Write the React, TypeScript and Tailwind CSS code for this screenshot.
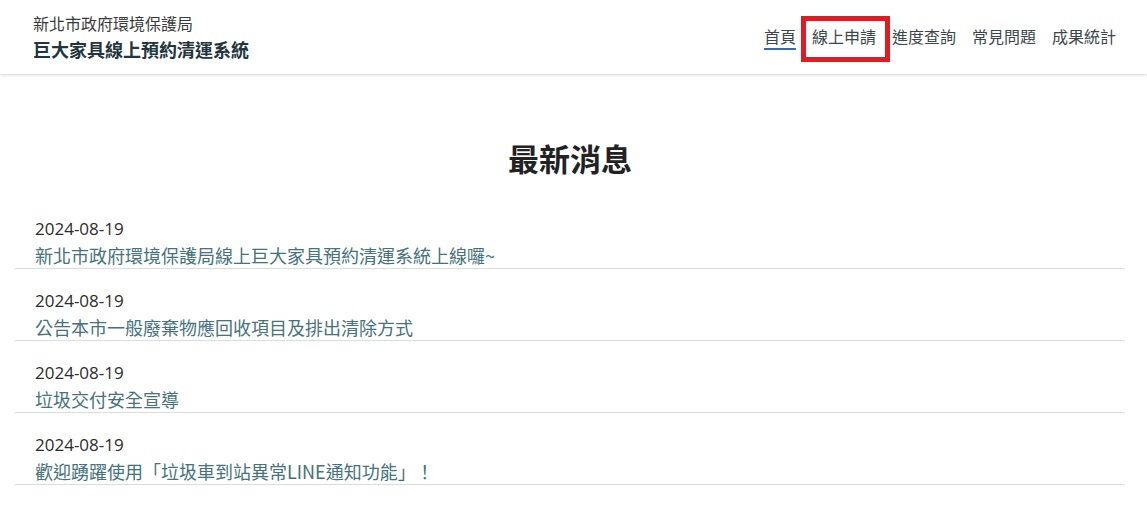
import React from "react";

const news = [
  { date: "2024-08-19", title: "新北市政府環境保護局線上巨大家具預約清運系統上線囉~" },
  { date: "2024-08-19", title: "公告本市一般廢棄物應回收項目及排出清除方式" },
  { date: "2024-08-19", title: "垃圾交付安全宣導" },
  { date: "2024-08-19", title: "歡迎踴躍使用「垃圾車到站異常LINE通知功能」！" },
];

const navItems = ["首頁", "線上申請", "進度查詢", "常見問題", "成果統計"];

export default function App() {
  return (
    <div className="min-h-[531px] w-full bg-white font-['Open_Sans','Noto_Sans_CJK_TC',sans-serif]">
      <header className="flex h-[74px] items-center justify-between pl-[33px] pr-[31px] shadow-[0_1px_3px_rgba(0,0,0,0.18)]">
        <div className="flex flex-col">
          <div className="text-[16px] leading-[24px] text-[#3a3a3a] font-['Noto_Sans_CJK_TC',sans-serif]">新北市政府環境保護局</div>
          <div className="text-[18px] leading-[28px] font-bold text-[#1f3640] font-['Noto_Sans_CJK_TC',sans-serif]">巨大家具線上預約清運系統</div>
        </div>
        <nav className="flex items-start gap-[16px]">
          {navItems.map((item, i) => (
            <div key={item} className="relative flex flex-col">
              <span className="text-[16px] leading-[24px] text-[#3b464c] font-['Noto_Sans_CJK_TC',sans-serif]">{item}</span>
              <span className={i === 0 ? "h-[2px] w-full bg-[#3d6aa6]" : "h-[2px] w-full bg-transparent"} />
              {i === 1 && (
                <span className="pointer-events-none absolute left-[-11px] top-[-8px] h-[46px] w-[89px] border-[5px] border-[#e11b24]" />
              )}
            </div>
          ))}
        </nav>
      </header>

      <main className="pt-[64px] pr-[7px]">
        <h1 className="text-center text-[31px] leading-[40px] font-bold text-[#222] font-['Noto_Sans_CJK_TC',sans-serif]">最新消息</h1>
        <ul className="mt-[19px] pl-[15px] pr-[15px]">
          {news.map((n, i) => (
            <li key={i} className="border-b border-[#dcdcdc] pl-[20px] pt-[19px]">
              <div className="text-[17px] leading-[26px] text-[#2b2b2b]">{n.date}</div>
              <div className="text-[18px] leading-[26px] text-[#44727d] font-['Noto_Sans_CJK_TC',sans-serif]">{n.title}</div>
            </li>
          ))}
        </ul>
      </main>
    </div>
  );
}
